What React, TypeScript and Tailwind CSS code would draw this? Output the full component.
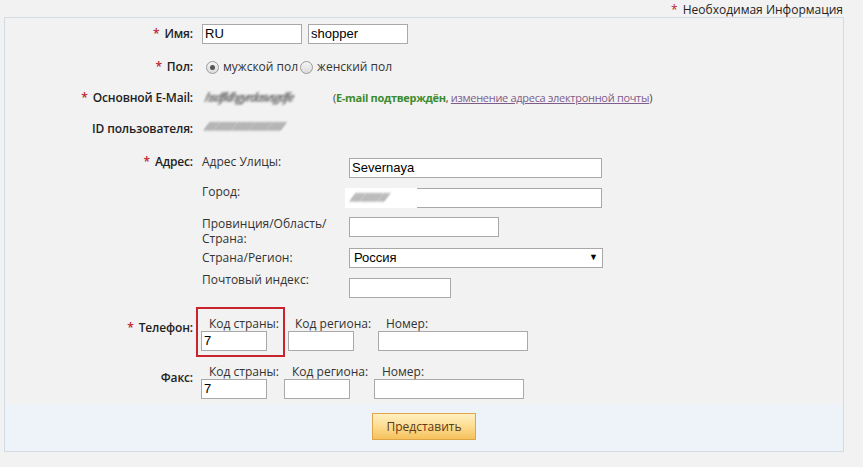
import React from "react";

const F = { fontFamily: '"Open Sans", "Liberation Sans", sans-serif' };
const A = { fontFamily: '"Liberation Sans", Arial, sans-serif' };

function Inp({ w, v }: { w: string; v?: string }) {
  return (
    <div
      className={`${w} h-[20px] bg-white border border-[#a9a9a9] flex items-center px-[2px] text-[13px] text-black overflow-hidden`}
      style={A}
    >
      {v}
    </div>
  );
}

function Star() {
  return <span className="text-[#b8232f] mr-[5px]">*</span>;
}

function Radio({ on }: { on?: boolean }) {
  return (
    <span className="w-[13px] h-[13px] rounded-full border border-[#9a9a9a] bg-gradient-to-b from-[#f4f4f4] to-[#dcdcdc] flex items-center justify-center">
      {on && <span className="w-[5px] h-[5px] rounded-full bg-[#555]" />}
    </span>
  );
}

function Label({ children, req, className = "" }: { children: React.ReactNode; req?: boolean; className?: string }) {
  return (
    <div className={`w-[196px] shrink-0 text-right pr-[8px] font-semibold text-[#222] tracking-[-0.15px] ${className}`}>
      {req && <Star />}
      {children}
    </div>
  );
}

function Blur({ w, text }: { w: string; text: string }) {
  return (
    <span
      className={`${w} inline-block blur-[1.3px] text-[#7a7a7a] italic font-bold tracking-[-1.5px] overflow-hidden whitespace-nowrap -skew-x-12`}
    >
      {text}
    </span>
  );
}

export default function App() {
  return (
    <div className="w-[863px] h-[467px] bg-[#f2f2f2] text-[12px] text-[#333] overflow-hidden" style={F}>
      <div className="h-[17px] flex justify-end items-center pr-[20px] leading-none pt-[2px]">
        <Star />
        <span className="text-[#222]">Необходимая Информация</span>
      </div>
      <div className="ml-[4px] w-[840px] border border-[#d3dbe5] bg-[#f2f2f2]">
        <div className="pt-[6px]">
          {/* Name */}
          <div className="flex items-center h-[20px]">
            <Label req>Имя:</Label>
            <div className="flex gap-[6px] pl-[1px]">
              <Inp w="w-[100px]" v="RU" />
              <Inp w="w-[100px]" v="shopper" />
            </div>
          </div>
          {/* Gender */}
          <div className="flex items-center h-[20px] mt-[13px]">
            <Label req>Пол:</Label>
            <div className="flex items-center pl-[5px] text-[#333]">
              <Radio on />
              <span className="ml-[4px]">мужской пол</span>
              <span className="ml-[2px]"><Radio /></span>
              <span className="ml-[4px]">женский пол</span>
            </div>
          </div>
          {/* Email */}
          <div className="flex items-center h-[20px] mt-[11px]">
            <Label req>Основной E-Mail:</Label>
            <div className="flex items-center pl-[4px]">
              <Blur w="w-[118px]" text="hsdfklhgyrdasvsgdfe" />
              <span className="ml-[10px] text-[11px] text-[#444] tracking-[-0.3px]">
                (<span className="text-[#3b8c2f] font-bold">E-mail подтверждён</span>,{" "}
                <span className="text-[#7e5d8c] underline">изменение адреса электронной почты</span>)
              </span>
            </div>
          </div>
          {/* ID */}
          <div className="flex items-center h-[20px] mt-[11px]">
            <Label>ID пользователя:</Label>
            <div className="pl-[4px]">
              <Blur w="w-[112px]" text="//////////////////////" />
            </div>
          </div>
          {/* Address */}
          <div className="flex mt-[13px]">
            <Label req className="pt-[1px]">Адрес:</Label>
            <div className="flex flex-col pl-[1px]">
              <div className="flex">
                <div className="w-[147px] pt-[1px]">Адрес Улицы:</div>
                <div className="pt-[6px]"><Inp w="w-[253px]" v="Severnaya" /></div>
              </div>
              <div className="flex mt-[4px]">
                <div className="w-[147px] pt-[1px]">Город:</div>
                <div className="pt-[6px] relative">
                  <Inp w="w-[253px]" />
                  <span className="absolute left-[-4px] top-[6px] w-[72px] h-[20px] bg-white blur-[0.6px] flex items-center pl-[6px]">
                    <Blur w="w-[50px]" text="//////////" />
                  </span>
                </div>
              </div>
              <div className="flex mt-[8px]">
                <div className="w-[147px] leading-[15px]">
                  Провинция/Область/
                  <br />
                  Страна:
                </div>
                <div className="pt-[1px]"><Inp w="w-[150px]" /></div>
              </div>
              <div className="flex mt-[2px] items-center">
                <div className="w-[147px]">Страна/Регион:</div>
                <div
                  className="w-[254px] h-[20px] bg-white border border-[#a9a9a9] flex items-center justify-between pl-[4px] pr-[4px] text-[13px] text-black"
                  style={A}
                >
                  <span>Россия</span>
                  <span className="text-[9px]">▼</span>
                </div>
              </div>
              <div className="flex mt-[3px]">
                <div className="w-[147px]">Почтовый индекс:</div>
                <div className="pt-[7px]"><Inp w="w-[102px]" /></div>
              </div>
            </div>
          </div>
          {/* Phone */}
          <div className="flex mt-[9px]">
            <Label req className="pt-[12px]">Телефон:</Label>
            <div className="flex items-start -ml-[5px]">
              <div className="border-2 border-[#c8242c] w-[89px] h-[50px] pl-[3px] pt-[7px]">
                <div className="pl-[8px] leading-[16px]">Код страны:</div>
                <div className="-mt-[1px]"><Inp w="w-[66px]" v="7" /></div>
              </div>
              <div className="pt-[9px] ml-[3px] w-[90px]">
                <div className="pl-[7px] leading-[16px]">Код региона:</div>
                <div className="-mt-[1px]"><Inp w="w-[66px]" /></div>
              </div>
              <div className="pt-[9px]">
                <div className="pl-[8px] leading-[16px]">Номер:</div>
                <div className="-mt-[1px]"><Inp w="w-[150px]" /></div>
              </div>
            </div>
          </div>
          {/* Fax */}
          <div className="flex mt-[7px] pb-[5px]">
            <Label className="pt-[5px]">Факс:</Label>
            <div className="flex items-start">
              <div className="w-[83px]">
                <div className="pl-[8px] leading-[16px]">Код страны:</div>
                <div className="-mt-[1px]"><Inp w="w-[66px]" v="7" /></div>
              </div>
              <div className="w-[90px]">
                <div className="pl-[8px] leading-[16px]">Код региона:</div>
                <div className="-mt-[1px]"><Inp w="w-[66px]" /></div>
              </div>
              <div>
                <div className="pl-[8px] leading-[16px]">Номер:</div>
                <div className="-mt-[1px]"><Inp w="w-[150px]" /></div>
              </div>
            </div>
          </div>
        </div>
        <div className="bg-[#eef3fa] h-[47px] flex items-start pt-[9px] pl-[367px]">
          <button
            className="w-[104px] h-[27px] border border-[#e0a547] bg-gradient-to-b from-[#fff0c2] via-[#fddc8e] to-[#f6c15c] text-[12px] text-[#5a3b1a]"
            style={F}
          >
            Представить
          </button>
        </div>
      </div>
    </div>
  );
}
